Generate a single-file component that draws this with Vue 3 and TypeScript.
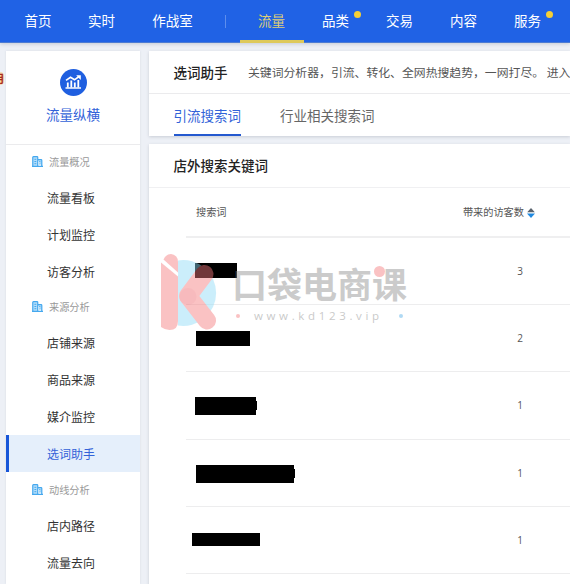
<script setup lang="ts">
interface NavItem { label: string; width: number; dot?: boolean; active?: boolean }
interface MenuGroup { title: string; items: string[] }
interface Row { top: number; left: number; width: number; height: number; visitors: number; notch?: boolean }

const navItems: NavItem[] = [
  { label: '流量', width: 64, active: true },
  { label: '品类', width: 64, dot: true },
  { label: '交易', width: 64 },
  { label: '内容', width: 64 },
  { label: '服务', width: 64, dot: true },
]

const groups: MenuGroup[] = [
  { title: '流量概况', items: ['流量看板', '计划监控', '访客分析'] },
  { title: '来源分析', items: ['店铺来源', '商品来源', '媒介监控', '选词助手'] },
  { title: '动线分析', items: ['店内路径', '流量去向'] },
]
const current = '选词助手'

const rows: Row[] = [
  { top: 25, left: 9, width: 42, height: 15, visitors: 3 },
  { top: 26, left: 10, width: 54, height: 15, visitors: 2 },
  { top: 25, left: 9, width: 61, height: 18, visitors: 1, notch: true },
  { top: 25, left: 10, width: 98, height: 18, visitors: 1, notch: true },
  { top: 26, left: 6, width: 68, height: 13, visitors: 1 },
]
</script>

<template>
  <div class="page">
    <header class="nav">
      <a class="nav-item home">首页</a>
      <a class="nav-item live">实时</a>
      <a class="nav-item war">作战室</a>
      <i class="nav-split"></i>
      <a v-for="n in navItems" :key="n.label" class="nav-item" :class="{ active: n.active }" :style="{ width: n.width + 'px' }">
        <span class="nav-label">{{ n.label }}<i v-if="n.dot" class="dot"></i></span>
      </a>
    </header>

    <span class="edge-tag"><b>用</b></span>

    <div class="body">
      <aside class="side">
        <div class="side-head">
          <svg class="side-logo" viewBox="0 0 27 27">
            <circle cx="13.5" cy="13.5" r="13.5" fill="#1f5fe0" />
            <g fill="none" stroke="#fff">
              <path d="M5.5 19H21" stroke-width="1.5" />
              <path d="M7.8 18.500V13.500M11.300 18.500V11.500M14.800 18.500V13.500M18.300 18.500V11" stroke-width="1.800" />
              <path d="M6 11.300 10.500 8.300 14.500 10.800 19 7.500" stroke-width="1.600" />
            </g>
            <path d="M16.200 6.300H20.800V11z" fill="#fff" />
          </svg>
          <div class="side-title">流量纵横</div>
        </div>
        <section v-for="g in groups" :key="g.title" class="group">
          <div class="group-title">
            <svg class="building" viewBox="0 0 10 10">
              <path d="M.7 9.300V1.200Q.7.600 1.300.600H4.600Q5.200.600 5.200 1.200V9.300M5.200 3.200H8.200Q8.900 3.200 8.900 4V9.300M0 9.400H10" fill="#b4defa" stroke="#45a8ee" stroke-width="1.1" />
              <path d="M2.200 3H3.900M2.200 5H3.900M2.200 7H3.900M6.500 5.200H7.700M6.500 7.200H7.700" stroke="#45a8ee" stroke-width=".9" />
            </svg>
            <span>{{ g.title }}</span>
          </div>
          <a v-for="i in g.items" :key="i" class="item" :class="{ on: i === current }">{{ i }}</a>
        </section>
      </aside>

      <main class="main">
        <section class="card intro">
          <div class="intro-line">
            <h1>选词助手</h1>
            <p>关键词分析器，引流、转化、全网热搜趋势，一网打尽。 进入</p>
          </div>
          <div class="tabs">
            <a class="tab selected">引流搜索词</a>
            <a class="tab">行业相关搜索词</a>
          </div>
        </section>

        <section class="card words">
          <h2>店外搜索关键词</h2>
          <div class="table">
            <div class="thead">
              <span>搜索词</span>
              <span class="sort">带来的访客数
                <svg viewBox="0 0 8 10"><path d="M4 0 7.800 4.300H.2z" fill="#59636d" /><path d="M0 5.500H8L4 10z" fill="#2189df" /></svg>
              </span>
            </div>
            <div v-for="(r, k) in rows" :key="k" class="row">
              <i class="mask" :class="{ notch: r.notch }" :style="{ marginTop: r.top + 'px', marginLeft: r.left + 'px', width: r.width + 'px', height: r.height + 'px' }"></i>
              <span class="num">{{ r.visitors }}</span>
            </div>
          </div>
        </section>
      </main>
    </div>

    <div class="watermark">
      <svg class="k-logo" viewBox="0 0 56 76">
        <path d="M17 6.400A33 33 0 1 1 17 71.600z" fill="#8fdcf8" />
        <path d="M0 8.500 17 22.500V67Q17 76 8.500 76 4 76 0 73z" fill="#f67b7e" />
        <path d="M2.500 5.500Q5 0 10 0 17 1 17 8V18.500z" fill="#f67b7e" />
        <path d="M0 6.500 17 20.500" stroke="#fff" stroke-width="1.600" />
        <path d="M27 42 43.500 20M27 42 46 66.500" stroke="#f67b7e" stroke-width="18" stroke-linecap="round" fill="none" />
        <circle cx="27" cy="42.500" r="8.500" fill="#ee6b70" />
      </svg>
      <div class="brand">口袋电商课<i class="brand-dot"></i></div>
      <div class="site"><i class="pip red"></i><span>www.kd123.vip</span><i class="pip blue"></i></div>
    </div>
  </div>
</template>

<style>
body { margin: 0; overflow: hidden; background: #edf0f6; }
</style>

<style scoped>
.page { position: relative; width: 570px; height: 584px; overflow: hidden; background: #edf0f6; color: #333; font-family: "Noto Sans CJK SC", sans-serif; }
.page * { box-sizing: border-box; }
.nav { position: relative; display: flex; height: 43px; background: #2062e5; border-bottom: 1px solid #4c7bd3; box-shadow: 0 1px 4px #c4c9d3; color: #fff; font-size: 13.5px; }
.nav-item { flex: none; height: 43px; line-height: 41px; text-align: center; white-space: nowrap; }
.home { width: 64px; margin-left: 6px; }
.live { width: 63px; }
.war { width: 79px; }
.nav-split { flex: none; width: 1px; height: 13px; margin: 15px 14px 0 13px; background: #5e8eed; }
.nav-label { position: relative; left: -.5px; display: inline-block; }
.active { color: #dfcf76; border-bottom: 3px solid #dec95b; }
.dot { position: absolute; top: 11px; right: -12px; width: 7px; height: 7px; border-radius: 50%; background: #f5cf35; }
.edge-tag { position: absolute; left: 0; top: 72px; width: 4px; height: 13px; overflow: hidden; border-radius: 0 4px 4px 0; background: #f4d9b0; color: #a82a18; font-size: 11px; line-height: 12px; }
.edge-tag b { display: block; margin-left: -7px; width: 11px; }
.body { display: flex; gap: 9px; padding: 8px 0 0 6px; }
.side { flex: none; width: 134px; height: 533px; background: #fff; box-shadow: 0 0 2px #d5d9e1; }
.side-head { display: flex; flex-direction: column; align-items: center; height: 94px; padding-top: 18px; border-bottom: 1px solid #ebebed; }
.side-logo { width: 27px; height: 27px; }
.side-title { margin-top: 8px; color: #3262d8; font-size: 13.5px; line-height: 20px; }
.group-title { display: flex; align-items: center; gap: 7px; height: 34px; padding: 0 0 1px 26px; color: #999; font-size: 10.2px; }
.group:last-child .group-title { height: 35px; }
.building { width: 11px; height: 11px; margin-right: -1px; }
.item { display: block; height: 37px; padding-left: 41px; font-size: 12px; line-height: 37px; }
.item.on { padding-left: 38px; border-left: 3px solid #1856d8; background: #e5effb; color: #3262d8; }
.main { flex: 1; min-width: 0; }
.card { background: #fff; box-shadow: 0 1px 3px #c9cdd5; overflow: hidden; }
.intro { height: 85px; }
.intro-line { display: flex; align-items: center; height: 43px; padding: 0 0 1px 24.5px; border-bottom: 1px solid #ebebed; white-space: nowrap; }
h1, h2, p { margin: 0; }
h1, h2 { font-size: 13.5px; font-weight: 500; color: #222; }
p { margin-left: 20.5px; font-size: 11.85px; color: #555; }
.tabs { display: flex; gap: 39px; height: 42px; padding-left: 24.5px; font-size: 13.5px; line-height: 42px; color: #666; }
.selected { color: #3262d8; border-bottom: 2px solid #2459cf; }
.words { height: 450px; margin-top: 8px; }
h2 { height: 44px; padding-left: 24.5px; line-height: 43px; border-bottom: 1px solid #f0f0f2; }
.table { margin-left: 37px; }
.thead { display: flex; justify-content: space-between; align-items: center; height: 50px; padding: 0 35.500px 1px 10px; border-bottom: 2px solid #efeff0; font-size: 10.2px; color: #555; }
.sort { display: flex; align-items: center; gap: 2.5px; }
.sort svg { width: 8px; height: 10px; margin-top: 2px; }
.row { display: flex; justify-content: space-between; height: 67.2px; border-bottom: 1px solid #ededee; }
.mask { position: relative; display: block; background: #000; }
.notch::after { content: ""; position: absolute; right: -1px; top: 4px; width: 1px; height: 9px; background: #000; }
.num { width: 60px; margin-right: 20px; text-align: center; font: 10px/67px "Open Sans", sans-serif; color: #555; }
.watermark { position: absolute; left: 161px; top: 254px; width: 250px; height: 78px; opacity: .46; }
.k-logo { position: absolute; left: 0; top: 0; width: 56px; height: 76px; }
.brand { position: absolute; left: 71px; top: 7px; color: #8f8f8f; font-size: 35px; font-weight: 700; line-height: 44px; white-space: nowrap; }
.brand-dot { position: absolute; left: 142px; top: 5px; width: 11px; height: 11px; border-radius: 50%; background: #f67b7e; }
.site { position: absolute; left: 75px; top: 54px; display: flex; align-items: center; width: 168px; height: 16px; color: #8c8c8c; font: 11.5px/16px "Open Sans", sans-serif; letter-spacing: 3.65px; }
.site span { width: 145px; margin-left: 14px; }
.pip { flex: none; width: 4px; height: 4px; border-radius: 50%; }
.red { background: #f67b7e; }
.blue { background: #55aee8; }
</style>
